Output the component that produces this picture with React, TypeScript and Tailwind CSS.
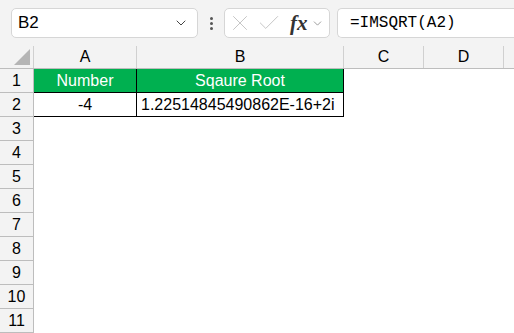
import { ChevronDown, X, Check } from 'lucide-react';

const rowNums = [1, 2, 3, 4, 5, 6, 7, 8, 9, 10, 11];

export default function App() {
  return (
    <div
      className="w-[514px] h-[333px] overflow-hidden bg-[#f3f3f3] text-black"
      style={{ fontFamily: "'Liberation Sans', Arial, sans-serif" }}
    >
      {/* Formula bar */}
      <div className="flex items-center h-[46px] pl-[11px]">
        <div className="flex items-center w-[187px] h-[30px] bg-white border border-[#d6d6d6] rounded-[5px] pl-[6px] pr-[8px]">
          <span className="text-[17px] flex-1">B2</span>
          <ChevronDown className="w-[16px] h-[16px] text-[#444]" strokeWidth={1.5} />
        </div>
        <div className="flex flex-col items-center gap-[2px] w-[26px]">
          <span className="w-[3px] h-[3px] bg-[#555] rounded-full" />
          <span className="w-[3px] h-[3px] bg-[#555] rounded-full" />
          <span className="w-[3px] h-[3px] bg-[#555] rounded-full" />
        </div>
        <div className="flex items-center w-[106px] h-[30px] bg-white border border-[#d6d6d6] rounded-[5px] pl-[2px]">
          <X className="w-[26px] h-[26px] text-[#c4c4c4]" strokeWidth={0.9} />
          <Check className="w-[26px] h-[26px] text-[#c4c4c4] ml-[3px]" strokeWidth={0.9} />
          <span
            className="ml-[8px] text-[21px] italic font-semibold text-[#333] leading-none"
            style={{ fontFamily: "'Liberation Serif', 'Times New Roman', serif" }}
          >
            fx
          </span>
          <ChevronDown className="w-[13px] h-[13px] text-[#888] ml-[3px]" strokeWidth={1.5} />
        </div>
        <div className="ml-[7px] flex items-center flex-1 h-[30px] bg-white border border-[#d6d6d6] rounded-l-[5px] border-r-0 pl-[12px]">
          <span
            className="text-[16px]"
            style={{ fontFamily: "'Liberation Mono', 'Courier New', monospace" }}
          >
            =IMSQRT(A2)
          </span>
        </div>
      </div>

      {/* Column headers */}
      <div className="flex h-[23px] border-b border-[#bdbdbd] text-[16px]">
        <div className="relative w-[34px] border-r border-[#d0d0d0]">
          <div className="absolute right-[3px] bottom-[3px] w-0 h-0 border-l-[16px] border-l-transparent border-b-[16px] border-b-[#b5b5b5]" />
        </div>
        <div className="w-[103px] border-r border-[#d0d0d0] flex items-center justify-center">A</div>
        <div className="w-[207px] border-r border-[#d0d0d0] flex items-center justify-center">B</div>
        <div className="w-[80px] border-r border-[#d0d0d0] flex items-center justify-center">C</div>
        <div className="w-[80px] border-r border-[#d0d0d0] flex items-center justify-center">D</div>
        <div className="flex-1" />
      </div>

      {/* Grid rows */}
      {rowNums.map(n => (
        <div key={n} className="flex h-[24px] text-[16px]">
          <div className="w-[34px] shrink-0 border-r border-b border-[#bdbdbd] flex items-center justify-center">
            {n}
          </div>
          {n === 1 && (
            <>
              <div className="w-[103px] bg-[#00b050] text-white border-r border-b border-black flex items-center justify-center">
                Number
              </div>
              <div className="w-[207px] bg-[#00b050] text-white border-r border-b border-black flex items-center justify-center">
                Sqaure Root
              </div>
            </>
          )}
          {n === 2 && (
            <>
              <div className="w-[103px] bg-white border-r border-b border-black flex items-center justify-center">
                -4
              </div>
              <div className="w-[207px] bg-white border-r border-b border-black flex items-center pl-[4px]">
                1.22514845490862E-16+2i
              </div>
            </>
          )}
          <div className="flex-1 bg-white" />
        </div>
      ))}
    </div>
  );
}
